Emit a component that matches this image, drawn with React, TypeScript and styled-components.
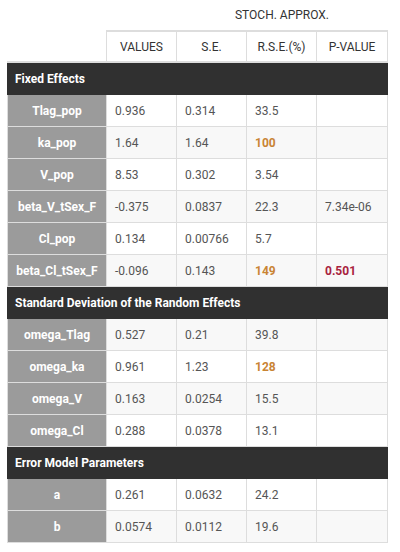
import React from "react";
import styled, { createGlobalStyle } from "styled-components";

const Global = createGlobalStyle`
  html, body { margin: 0; padding: 0; background: #fff; }
  body { font-family: Roboto, "Liberation Sans", Arial, sans-serif; }
`;

const Wrap = styled.div`
  padding: 0 0 0 7px;
  width: 380px;
`;

const Table = styled.table`
  border-collapse: collapse;
  width: 380px;
  table-layout: fixed;
  font-size: 12px;
  color: #555;
`;

const GroupTh = styled.th`
  height: 30px;
  padding: 0;
  font-weight: 400;
  font-size: 12px;
  color: #333;
  text-align: center;
  vertical-align: middle;
  border: none;
`;

const ColTh = styled.th<{ $empty?: boolean }>`
  height: 29px;
  padding: 0;
  font-weight: 400;
  font-size: 12px;
  color: #333;
  text-align: center;
  border: ${(p) => (p.$empty ? "none" : "1px solid #ddd")};
  border-top-width: ${(p) => (p.$empty ? "0" : "2px")};
  border-bottom-width: 2px;
  border-bottom-color: #ddd;
  border-bottom-style: solid;
`;

const SectionCell = styled.td`
  height: 31px;
  padding: 0 7px;
  background: #303030;
  color: #fff;
  font-weight: 700;
  font-size: 12px;
  text-align: left;
  border: 1px solid #303030;
`;

const LabelCell = styled.td`
  height: 31px;
  padding: 0 4px;
  background: #9b9b9b;
  color: #fff;
  font-weight: 700;
  text-align: center;
  border: 1px solid #ddd;
  white-space: nowrap;
`;

const ValueCell = styled.td<{ $tone?: "warn" | "alert" }>`
  height: 31px;
  padding: 0 8px;
  text-align: left;
  border: 1px solid #ddd;
  font-weight: ${(p) => (p.$tone ? 700 : 400)};
  color: ${(p) =>
    p.$tone === "warn" ? "#c98434" : p.$tone === "alert" ? "#a8233e" : "#555"};
`;

const Row = styled.tr<{ $stripe?: boolean }>`
  background: ${(p) => (p.$stripe ? "#f8f8f8" : "#fff")};
`;

type Tone = "warn" | "alert" | undefined;
type Param = {
  name: string;
  v: string;
  se: string;
  rse: string;
  p?: string;
  rseTone?: Tone;
  pTone?: Tone;
};

const sections: { title: string; rows: Param[] }[] = [
  {
    title: "Fixed Effects",
    rows: [
      { name: "Tlag_pop", v: "0.936", se: "0.314", rse: "33.5" },
      { name: "ka_pop", v: "1.64", se: "1.64", rse: "100", rseTone: "warn" },
      { name: "V_pop", v: "8.53", se: "0.302", rse: "3.54" },
      { name: "beta_V_tSex_F", v: "-0.375", se: "0.0837", rse: "22.3", p: "7.34e-06" },
      { name: "Cl_pop", v: "0.134", se: "0.00766", rse: "5.7" },
      {
        name: "beta_Cl_tSex_F",
        v: "-0.096",
        se: "0.143",
        rse: "149",
        p: "0.501",
        rseTone: "warn",
        pTone: "alert",
      },
    ],
  },
  {
    title: "Standard Deviation of the Random Effects",
    rows: [
      { name: "omega_Tlag", v: "0.527", se: "0.21", rse: "39.8" },
      { name: "omega_ka", v: "0.961", se: "1.23", rse: "128", rseTone: "warn" },
      { name: "omega_V", v: "0.163", se: "0.0254", rse: "15.5" },
      { name: "omega_Cl", v: "0.288", se: "0.0378", rse: "13.1" },
    ],
  },
  {
    title: "Error Model Parameters",
    rows: [
      { name: "a", v: "0.261", se: "0.0632", rse: "24.2" },
      { name: "b", v: "0.0574", se: "0.0112", rse: "19.6" },
    ],
  },
];

export default function App() {
  let idx = 0;
  return (
    <Wrap>
      <Global />
      <Table>
        <colgroup>
          <col style={{ width: 99 }} />
          <col style={{ width: 70 }} />
          <col style={{ width: 70 }} />
          <col style={{ width: 70 }} />
          <col style={{ width: 71 }} />
        </colgroup>
        <thead>
          <tr>
            <GroupTh />
            <GroupTh />
            <GroupTh colSpan={3}>STOCH. APPROX.</GroupTh>
          </tr>
          <tr>
            <ColTh $empty />
            <ColTh>VALUES</ColTh>
            <ColTh>S.E.</ColTh>
            <ColTh>R.S.E.(%)</ColTh>
            <ColTh>P-VALUE</ColTh>
          </tr>
        </thead>
        <tbody>
          {sections.map((s) => {
            idx++;
            return (
              <React.Fragment key={s.title}>
                <tr>
                  <SectionCell colSpan={5}>{s.title}</SectionCell>
                </tr>
                {s.rows.map((r) => {
                  idx++;
                  return (
                    <Row key={r.name} $stripe={idx % 2 === 1}>
                      <LabelCell>{r.name}</LabelCell>
                      <ValueCell>{r.v}</ValueCell>
                      <ValueCell>{r.se}</ValueCell>
                      <ValueCell $tone={r.rseTone}>{r.rse}</ValueCell>
                      <ValueCell $tone={r.pTone}>{r.p ?? ""}</ValueCell>
                    </Row>
                  );
                })}
              </React.Fragment>
            );
          })}
        </tbody>
      </Table>
    </Wrap>
  );
}
